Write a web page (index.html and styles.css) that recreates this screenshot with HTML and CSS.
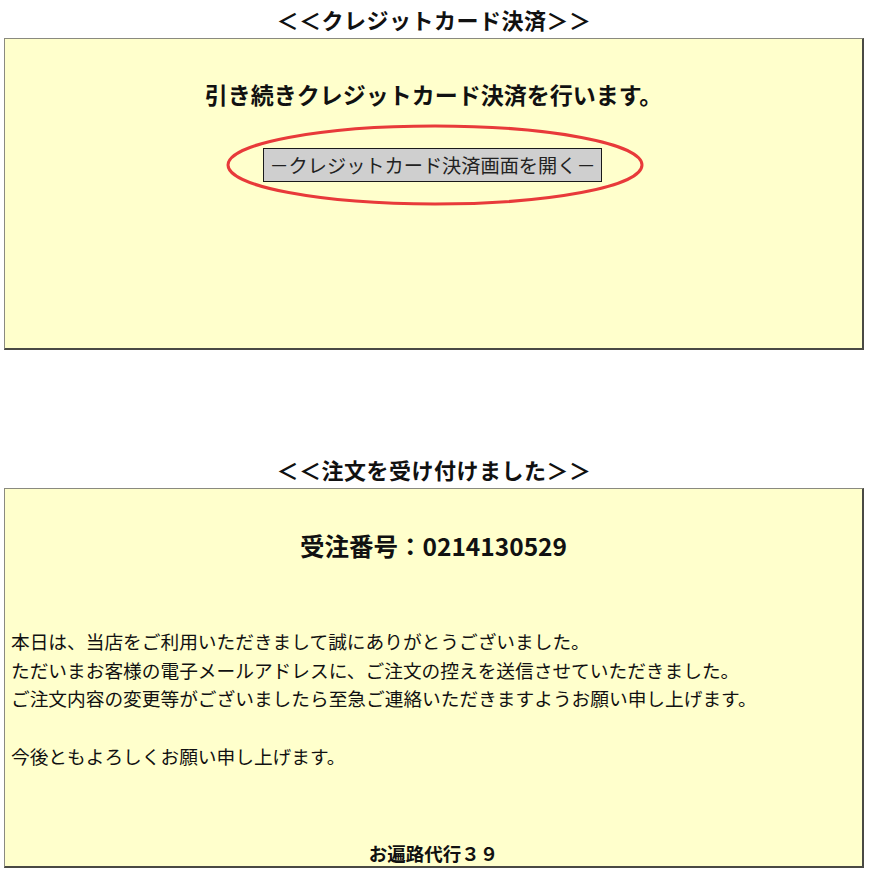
FILE: index.html
```html
<!DOCTYPE html>
<html lang="ja">
<head>
<meta charset="utf-8">
<title>注文完了</title>
<link rel="stylesheet" href="styles.css">
</head>
<body>
<div class="page">
  <h2 class="section-title">＜＜クレジットカード決済＞＞</h2>
  <div class="panel panel-card">
    <p class="lead">引き続きクレジットカード決済を行います。</p>
    <div class="btn-wrap">
      <button class="card-btn" type="button">－クレジットカード決済画面を開く－</button>
      <svg class="ring" width="420" height="84" viewBox="0 0 420 84" aria-hidden="true">
        <ellipse cx="210" cy="42" rx="207" ry="39" fill="none" stroke="#e83a3a" stroke-width="3"/>
      </svg>
    </div>
  </div>

  <h2 class="section-title section-title-2">＜＜注文を受け付けました＞＞</h2>
  <div class="panel panel-order">
    <p class="order-no">受注番号：0214130529</p>
    <div class="message">
      <p>本日は、当店をご利用いただきまして誠にありがとうございました。</p>
      <p>ただいまお客様の電子メールアドレスに、ご注文の控えを送信させていただきました。</p>
      <p>ご注文内容の変更等がございましたら至急ご連絡いただきますようお願い申し上げます。</p>
      <p class="blank">&nbsp;</p>
      <p>今後ともよろしくお願い申し上げます。</p>
    </div>
    <p class="shop">お遍路代行３９</p>
  </div>
</div>
</body>
</html>
```

FILE: styles.css
```css
html, body {
  margin: 0;
  padding: 0;
  background: #ffffff;
}

body {
  font-family: "Noto Sans CJK JP", "Noto Sans", sans-serif;
  color: #111111;
}

.page {
  width: 860px;
  margin-left: 4px;
}

.section-title {
  margin: 0;
  height: 38px;
  line-height: 38px;
  font-size: 22px;
  font-weight: bold;
  text-align: center;
  letter-spacing: 0.5px;
}

.section-title-2 {
  margin-top: 100px;
}

.panel {
  background: #ffffcc;
  border-top: 1px solid #8a8a80;
  border-left: 1px solid #8a8a80;
  border-right: 2px solid #4a4a44;
  border-bottom: 2px solid #4a4a44;
  box-sizing: border-box;
}

.panel-card {
  height: 312px;
  padding-top: 40px;
}

.lead {
  margin: 0;
  line-height: 30px;
  font-size: 23px;
  font-weight: bold;
  text-align: center;
}

.btn-wrap {
  position: relative;
  display: flex;
  justify-content: center;
  margin-top: 39px;
}

.card-btn {
  width: 339px;
  height: 34px;
  margin-left: -2px;
  padding: 0;
  background: #cfcfcf;
  border: 1px solid #1a1a1a;
  font-family: "Noto Sans CJK JP", "Noto Sans", sans-serif;
  font-size: 19.2px;
  color: #222222;
  line-height: 30px;
}

.ring {
  position: absolute;
  left: 220px;
  top: -25px;
  pointer-events: none;
}

.panel-order {
  height: 380px;
  padding-top: 42px;
}

.order-no {
  margin: 0;
  line-height: 30px;
  font-size: 24.5px;
  font-weight: bold;
  text-align: center;
}

.message {
  margin-top: 66px;
  padding-left: 6px;
}

.message p {
  margin: 0;
  font-size: 18.7px;
  line-height: 28.7px;
  white-space: nowrap;
}

.shop {
  margin: 67px 0 0;
  line-height: 30px;
  font-size: 18.5px;
  font-weight: bold;
  text-align: center;
}
```
